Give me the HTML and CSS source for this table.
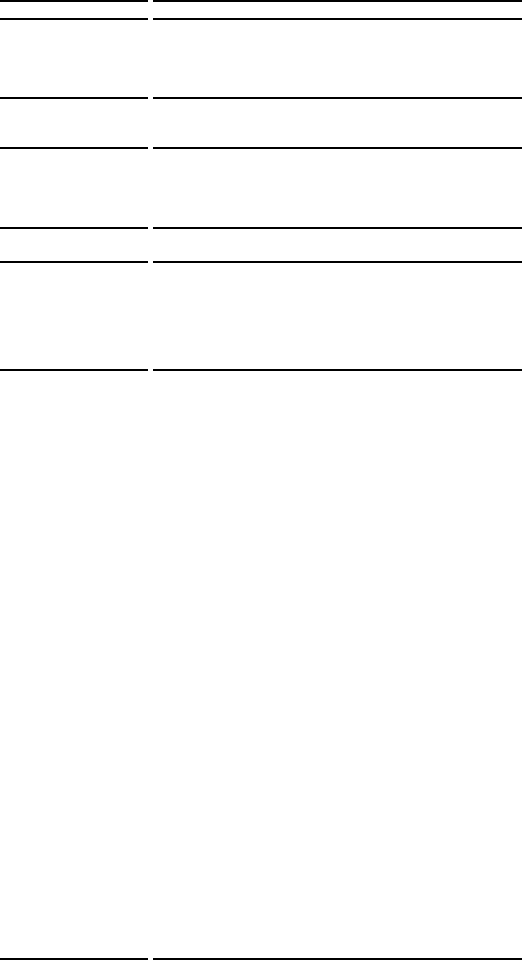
FILE: index.html
```html
<!DOCTYPE html>
<html lang="en">
<head>
    <meta charset="UTF-8">
    <meta name="viewport" content="width=device-width, initial-scale=1.0">
    <title>Sheet</title>
    <link rel="stylesheet" href="styles.css">
</head>
<body>

    <div class="sheet">
        <!-- header row -->
        <div class="row row-head">
            <div class="cell key"></div>
            <div class="cell value"></div>
        </div>
        <div class="row row-1">
            <div class="cell key"></div>
            <div class="cell value"></div>
        </div>
        <div class="row row-2">
            <div class="cell key"></div>
            <div class="cell value"></div>
        </div>
        <div class="row row-3">
            <div class="cell key"></div>
            <div class="cell value"></div>
        </div>
        <div class="row row-4">
            <div class="cell key"></div>
            <div class="cell value"></div>
        </div>
        <div class="row row-5">
            <div class="cell key"></div>
            <div class="cell value"></div>
        </div>
        <div class="row row-6">
            <div class="cell key"></div>
            <div class="cell value"></div>
        </div>
        <div class="row row-end">
            <div class="cell key"></div>
            <div class="cell value"></div>
        </div>
    </div>

</body>
</html>
```

FILE: styles.css
```css
body {
    font-family: "Liberation Sans", Arial, sans-serif;
    margin: 0;
    padding: 0;
    background-color: #fff;
}
.sheet {
    display: flex;
    flex-direction: column;
    width: 522px;
}
.row {
    display: flex;
    gap: 5px;
}
.cell {
    box-sizing: border-box;
    height: 100%;
    border-top: 2px solid #000;
}
.key {
    width: 148px;
    flex-shrink: 0;
}
.value {
    flex-grow: 1;
}

/* row heights (border included) */
.row-head { height: 18px; }
.row-1 { height: 79px; }
.row-2 { height: 50px; }
.row-3 { height: 80px; }
.row-4 { height: 34px; }
.row-5 { height: 108px; }
.row-6 { height: 589px; }
.row-end { height: 2px; }
```
